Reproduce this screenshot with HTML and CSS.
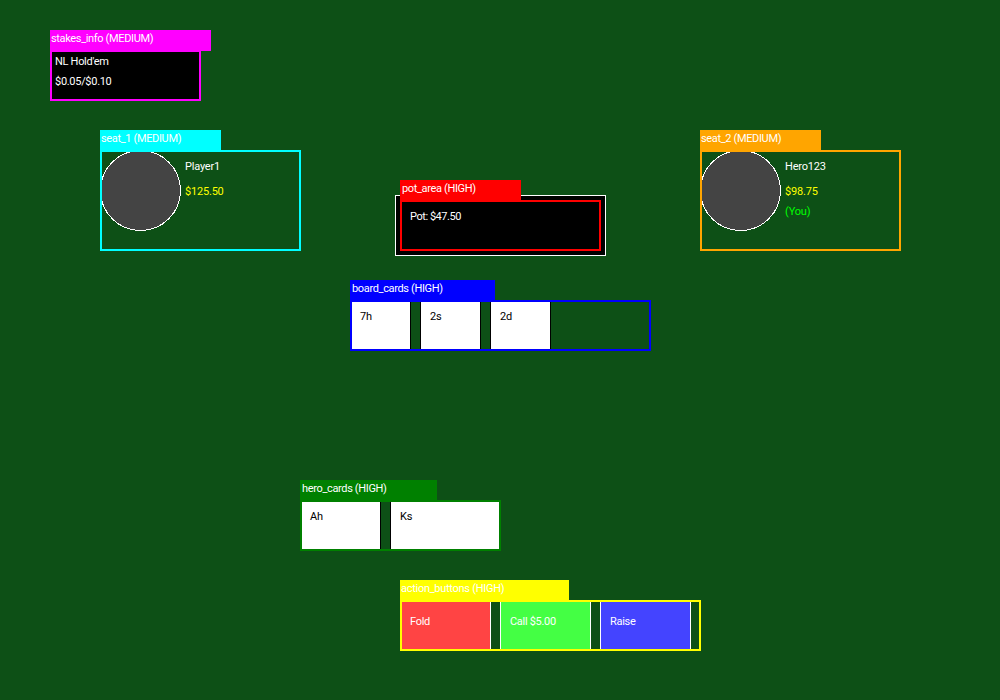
FILE: index.html
```html
<!DOCTYPE html>
<html lang="en">
<head>
<meta charset="utf-8">
<title>Poker table regions</title>
<link rel="stylesheet" href="styles.css">
</head>
<body>
<main class="table">
  <section class="region stakes">
    <div class="tag">stakes_info (MEDIUM)</div>
    <div class="frame"><p class="game">NL Hold'em</p><p class="blinds">$0.05/$0.10</p></div>
  </section>
  <section class="region seat seat-1">
    <div class="tag">seat_1 (MEDIUM)</div>
    <div class="frame">
      <svg class="avatar" width="81" height="81" viewBox="0 0 81 81" shape-rendering="crispEdges"><circle cx="40.5" cy="40.5" r="40"/></svg>
      <div class="info"><p class="name">Player1</p><p class="stack">$125.50</p></div>
    </div>
  </section>
  <section class="region seat seat-2">
    <div class="tag">seat_2 (MEDIUM)</div>
    <div class="frame">
      <svg class="avatar" width="81" height="81" viewBox="0 0 81 81" shape-rendering="crispEdges"><circle cx="40.5" cy="40.5" r="40"/></svg>
      <div class="info"><p class="name">Hero123</p><p class="stack">$98.75</p><p class="you">(You)</p></div>
    </div>
  </section>
  <div class="pot-plate"></div>
  <section class="region pot">
    <div class="tag">pot_area (HIGH)</div>
    <div class="frame"><p class="amount">Pot: $47.50</p></div>
  </section>
  <section class="region board">
    <div class="tag">board_cards (HIGH)</div>
    <div class="frame"><div class="card">7h</div><div class="card">2s</div><div class="card">2d</div></div>
  </section>
  <section class="region hole">
    <div class="tag">hero_cards (HIGH)</div>
    <div class="frame"><div class="card">Ah</div><div class="card wide">Ks</div></div>
  </section>
  <section class="region actions">
    <div class="tag">action_buttons (HIGH)</div>
    <div class="frame"><div class="btn fold">Fold</div><div class="btn call">Call $5.00</div><div class="btn raise">Raise</div></div>
  </section>
</main>
</body>
</html>
```
FILE: styles.css
```css
* { box-sizing: border-box; }
body { margin: 0; background: #0d5016; font: 11px/14px Roboto, "Liberation Sans", sans-serif; color: #fff; }
p { margin: 0; white-space: nowrap; }
.table { position: relative; width: 1000px; height: 700px; overflow: hidden; }

/* Regions sit freely on the table surface */
.region { position: absolute; width: 201px; --c: #fff; }
.tag { width: 121px; height: 20px; padding: 2px 0 0 1px; background: var(--c); white-space: nowrap; letter-spacing: -0.35px; }
.frame { position: relative; display: flex; height: 51px; overflow: hidden; letter-spacing: -0.2px; }
.frame::after { content: ""; position: absolute; inset: 0; border: 2px solid var(--c); }

.stakes { left: 50px; top: 30px; width: 161px; --c: #f0f; }
.stakes .tag { width: 161px; height: 21px; }
.stakes .frame { width: 151px; height: 50px; flex-direction: column; gap: 6px; padding: 4px 0 0 5px; background: #000; letter-spacing: -0.3px; }
.stakes .frame::after { border-top-width: 1px; }

.seat-1 { left: 100px; top: 130px; --c: #0ff; }
.seat-2 { left: 700px; top: 130px; --c: #ffa500; }
.seat .tag { height: 21px; }
.seat .frame { height: 101px; margin-top: -1px; gap: 4px; }
.avatar { flex: none; fill: #444; stroke: #fff; }
.info { display: flex; flex-direction: column; padding-top: 10px; }
.stack { margin-top: 11px; color: #ff0; }
.you { margin-top: 6px; color: #0f0; }

.pot-plate { position: absolute; left: 395px; top: 195px; width: 211px; height: 61px; background: #000; border: 1px solid #fff; }
.pot { left: 400px; top: 180px; --c: #f00; }
.pot .tag, .board .tag, .hole .tag { padding-left: 2px; }
.pot .amount { padding: 10px 0 0 10px; letter-spacing: -0.45px; }

.board { left: 350px; top: 280px; width: 301px; --c: #00f; }
.board .tag { width: 145px; }
.hole { left: 300px; top: 480px; --c: #008000; }
.hole .tag { width: 137px; }
.board .frame, .hole .frame, .actions .frame { gap: 9px; }
.card { flex: none; width: 61px; padding: 9px 0 0 9px; background: #fff; border: 1px solid #000; color: #000; }
.hole .card { width: 81px; }
.hole .card.wide { width: 121px; }

.actions { left: 400px; top: 580px; width: 301px; --c: #ff0; }
.actions .tag { width: 169px; letter-spacing: -0.28px; }
.btn { flex: none; width: 91px; padding: 14px 0 0 9px; border: 1px solid #fff; letter-spacing: -0.3px; }
.fold { background: #f44; }
.call { background: #4f4; }
.raise { background: #44f; }
```
